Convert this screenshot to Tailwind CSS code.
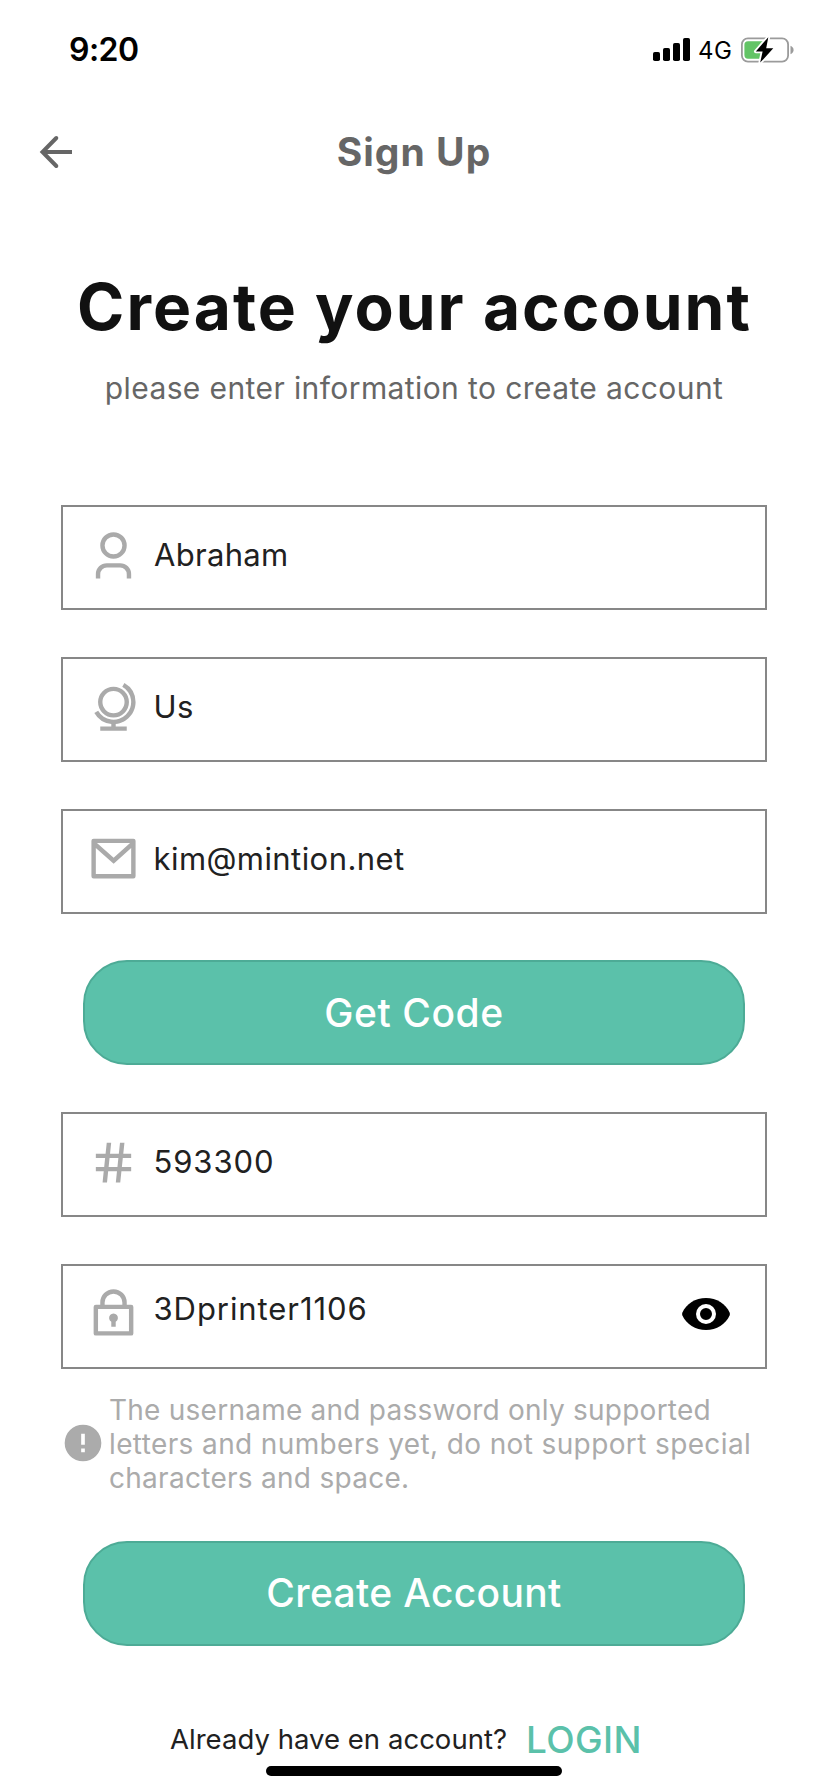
<!DOCTYPE html>
<html lang="en">
<head>
<meta charset="utf-8">
<title>Sign Up</title>
<script src="https://cdn.jsdelivr.net/npm/@tailwindcss/browser@4"></script>
</head>
<body class="bg-white">
<div class="relative flex h-[1792px] w-[828px] flex-col overflow-hidden bg-white font-['Inter',sans-serif] text-[#212121]">

  <!-- Status bar -->
  <div class="flex h-[99px] shrink-0 items-center justify-between pr-[33px] pl-[69px] text-black">
    <span class="text-[32px] leading-[40px] font-semibold tracking-[-0.54px]">9:20</span>
    <div class="flex items-center">
      <svg class="h-6 w-[38px]" viewBox="0 0 38 24"><rect x="0" y="14" width="7" height="9" rx="1.8"/><rect x="10" y="10" width="7" height="13" rx="1.8"/><rect x="20" y="5" width="7" height="18" rx="1.8"/><rect x="30" y="0" width="7" height="23" rx="1.8"/></svg>
      <span class="ml-[7px] w-[42px] pt-[2px] text-[24px] leading-[30px] tracking-[0.5px]">4G</span>
      <svg class="h-[28px] w-[55px]" viewBox="0 0 55 28">
        <rect x="1.9" y="2.4" width="46.2" height="23.2" rx="6" fill="none" stroke="#9b9b9b" stroke-width="1.8"/>
        <path d="M50.5 9.8c1.9.7 3.1 2.3 3.1 4.2s-1.200 3.500-3.100 4.200z" fill="#9b9b9b"/>
        <path d="M8 5.300h16v17.400H8a3.600 3.600 0 0 1-3.600-3.600V8.900A3.600 3.600 0 0 1 8 5.300z" fill="#63c466"/>
        <path d="M28.300 1.200 15.800 15.400h6.800L20.200 26.600 33.300 12.300H26.200z" fill="#000" stroke="#fff" stroke-width="3.600" stroke-linejoin="round" paint-order="stroke"/>
      </svg>
    </div>
  </div>

  <!-- Navigation header -->
  <div class="grid h-[106px] shrink-0 grid-cols-[1fr_auto_1fr] items-center px-8">
    <svg class="size-12" viewBox="0 0 48 48" fill="none" stroke="#666" stroke-width="4"><path d="M40 24H12"/><path d="M24.300 10 10.500 24l13.800 14" stroke-linecap="round"/></svg>
    <h1 class="text-[39px] leading-[48px] font-bold tracking-[1.03px] text-[#666]">Sign Up</h1>
    <span></span>
  </div>

  <!-- Intro -->
  <div class="shrink-0 pt-[63px] text-center">
    <h2 class="pl-px text-[64px] leading-[78px] font-bold tracking-[2.02px] whitespace-nowrap text-[#111]">Create your account</h2>
    <p class="mt-6 text-[30px] leading-[36px] tracking-[0.4px] whitespace-nowrap text-[#666]">please enter information to create account</p>
  </div>

  <!-- Form -->
  <div class="mt-[99.3px] flex w-[706px] shrink-0 flex-col gap-[46.67px] self-center">
    <div class="flex h-[105px] w-full items-start border-2 border-[#878787] pl-6">
      <svg class="mt-[22.500px] size-[53px] shrink-0" viewBox="0 0 24 24" fill="#aaa"><path d="M20 22h-2v-2a3 3 0 0 0-3-3H9a3 3 0 0 0-3 3v2H4v-2a5 5 0 0 1 5-5h6a5 5 0 0 1 5 5v2zm-8-9a6 6 0 1 1 0-12 6 6 0 0 1 0 12zm0-2a4 4 0 1 0 0-8 4 4 0 0 0 0 8z"/></svg>
      <span class="mt-[28.4px] ml-[14px] text-[31px] leading-[38px] tracking-[0.3px]">Abraham</span>
    </div>
    <div class="flex h-[105px] w-full items-start border-2 border-[#878787] pl-6">
      <svg class="mt-[20.8px] size-[53px] shrink-0" viewBox="0 0 24 24" fill="#aaa"><path d="M13 21h5v2H6v-2h5v-1.050a10.002 10.002 0 0 1-7.684-4.988l1.737-.992A8 8 0 1 0 15.970 3.053l.992-1.737A9.996 9.996 0 0 1 22 10c0 5.185-3.947 9.449-9 9.950V21zm-1-4a7 7 0 1 1 0-14 7 7 0 0 1 0 14zm0-2a5 5 0 1 0 0-10 5 5 0 0 0 0 10z"/></svg>
      <span class="mt-[29.2px] ml-[13.500px] text-[31px] leading-[38px] tracking-[0.43px]">Us</span>
    </div>
    <div class="flex h-[105px] w-full items-start border-2 border-[#878787] pl-6">
      <svg class="mt-[20.9px] size-[53px] shrink-0" viewBox="0 0 24 24" fill="#aaa"><path d="M3 3h18a1 1 0 0 1 1 1v16a1 1 0 0 1-1 1H3a1 1 0 0 1-1-1V4a1 1 0 0 1 1-1zm17 4.238l-7.928 7.100L4 7.216V19h16V7.238zM4.511 5l7.550 6.662L19.502 5H4.511z"/></svg>
      <span class="mt-[29.4px] ml-[13.500px] text-[31px] leading-[38px] tracking-[0.43px]">kim@mintion.net</span>
    </div>
    <button class="flex h-[105px] w-[662px] items-center justify-center self-center rounded-[44px] border-2 border-[#4dab96] bg-[#5bc1aa] text-[39px] leading-[48px] font-[550] tracking-[0.55px] text-white">Get Code</button>
    <div class="flex h-[105px] w-full items-start border-2 border-[#878787] pl-6">
      <svg class="mt-[21.600px] size-[53px] shrink-0" viewBox="0 0 24 24" fill="#aaa"><path d="M7.784 14l.42-4H4V8h4.415l.525-5h2.011l-.525 5h3.989l.525-5h2.011l-.525 5H20v2h-3.784l-.42 4H20v2h-4.415l-.525 5h-2.011l.525-5H9.585l-.525 5H7.049l.525-5H4v-2h3.784zm2.011 0h3.990l.42-4h-3.990l-.42 4z"/></svg>
      <span class="mt-[29.2px] ml-[13.500px] text-[31px] leading-[38px] tracking-[0.9px]">593300</span>
    </div>
    <div class="flex h-[105px] w-full items-start border-2 border-[#878787] pr-[35px] pl-6">
      <svg class="mt-[21.2px] size-[53px] shrink-0" viewBox="0 0 24 24" fill="#aaa"><path d="M6 8V7a6 6 0 1 1 12 0v1h2a1 1 0 0 1 1 1v12a1 1 0 0 1-1 1H4a1 1 0 0 1-1-1V9a1 1 0 0 1 1-1h2zm13 2H5v10h14V10zm-8 5.732a2 2 0 1 1 2 0V18h-2v-2.268zM8 8h8V7a4 4 0 1 0-8 0v1z"/></svg>
      <span class="mt-6 ml-[13.500px] text-[31px] leading-[38px] tracking-[0.93px]">3Dprinter1106</span>
      <svg class="mt-[32.400px] ml-auto h-8 w-12 shrink-0" viewBox="0 0 48 32"><path d="M24 0C13.500 0 4 6 .4 14.500q-.600 1.500 0 3C4 26 13.500 32 24 32s20-6 23.600-14.500q.600-1.500 0-3C44 6 34.500 0 24 0z"/><circle cx="24" cy="16" r="8" fill="none" stroke="#fff" stroke-width="4"/></svg>
    </div>
  </div>

  <!-- Hint -->
  <div class="mt-[24.4px] flex shrink-0 items-start pl-[60.500px] text-[#ababab]">
    <svg class="mt-[27.800px] size-11 shrink-0" viewBox="0 0 24 24" fill="currentColor"><path d="M12 2a10 10 0 1 0 0 20 10 10 0 0 0 0-20zm1 15h-2v-2h2v2zm0-4h-2V7h2v6z"/></svg>
    <p class="ml-[4.500px] text-[28px] leading-[34px] tracking-[0.38px] whitespace-nowrap">
      <span class="tracking-[0.24px]">The username and password only supported</span><br>letters and numbers yet, do not support special<br><span class="tracking-[0.28px]">characters and space.</span>
    </p>
  </div>

  <button class="mt-[46px] flex h-[105px] w-[662px] shrink-0 items-center justify-center self-center rounded-[44px] border-2 border-[#4dab96] bg-[#5bc1aa] text-[39px] leading-[48px] font-[550] tracking-[0.33px] text-white">Create Account</button>

  <!-- Footer -->
  <div class="mt-[67px] flex shrink-0 items-baseline pl-[170px]">
    <span class="w-[356px] text-[27.500px] leading-[34px] tracking-[0.03px] whitespace-nowrap">Already have en account?</span>
    <a class="translate-y-1 text-[37px] leading-[46px] font-[550] tracking-[0.4px] text-[#5bc1aa]">LOGIN</a>
  </div>

  <!-- Home indicator -->
  <div class="absolute bottom-4 left-[266px] h-[10px] w-[296px] rounded-full bg-black"></div>
</div>
</body>
</html>
